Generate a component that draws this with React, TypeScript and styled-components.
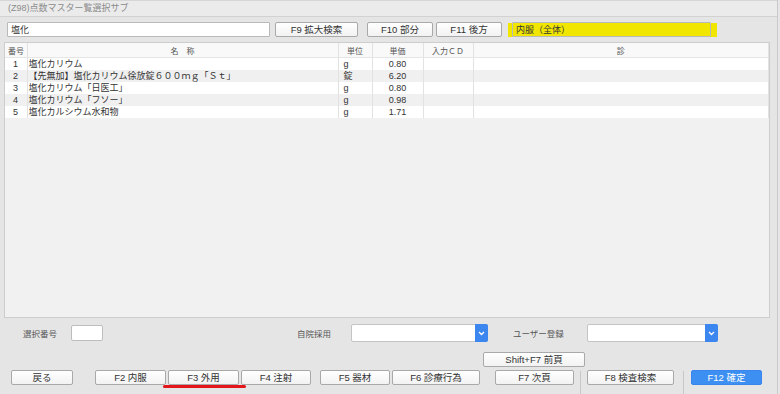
import React from 'react';
import styled, { createGlobalStyle } from 'styled-components';

const Global = createGlobalStyle`
  html, body { margin: 0; padding: 0; background: #e6e6e6; }
  body { font-family: "Liberation Sans", "Noto Sans CJK JP", sans-serif; color: #333; }
`;

type Row = { no: number; name: string; unit: string; price: string };

const rows: Row[] = [
  { no: 1, name: '塩化カリウム', unit: 'g', price: '0.80' },
  { no: 2, name: '【先無加】塩化カリウム徐放錠６００ｍｇ「Ｓｔ」', unit: '錠', price: '6.20' },
  { no: 3, name: '塩化カリウム「日医工」', unit: 'g', price: '0.80' },
  { no: 4, name: '塩化カリウム「フソー」', unit: 'g', price: '0.98' },
  { no: 5, name: '塩化カルシウム水和物', unit: 'g', price: '1.71' },
];

const Chevron = () => (
  <svg width="7" height="5" viewBox="0 0 7 5">
    <path d="M1 1 L3.5 3.5 L6 1" fill="none" stroke="#fff" strokeWidth="1.3" />
  </svg>
);

const App = () => {
  return (
    <Window>
      <Global />
      <TitleBar>(Z98)点数マスター覧選択サブ</TitleBar>

      <SearchRow>
        <SearchInput defaultValue="塩化" $w={263} />
        <Btn $w={83} $ml={5}>F9 拡大検索</Btn>
        <Btn $w={66} $ml={9}>F10 部分</Btn>
        <Btn $w={66} $ml={3}>F11 後方</Btn>
        <Highlight>
          <SearchInput defaultValue="内服（全体）" $w={199} $clear />
        </Highlight>
      </SearchRow>

      <TableBox>
        <Grid>
          <colgroup>
            <col style={{ width: 22 }} />
            <col style={{ width: 311 }} />
            <col style={{ width: 34 }} />
            <col style={{ width: 51 }} />
            <col style={{ width: 50 }} />
            <col />
          </colgroup>
          <thead>
            <tr>
              <Th $left>番号</Th>
              <Th>名　称</Th>
              <Th>単位</Th>
              <Th>単価</Th>
              <Th>入力ＣＤ</Th>
              <Th>診</Th>
            </tr>
          </thead>
          <tbody>
            {rows.map((r) => (
              <Tr key={r.no} $odd={r.no % 2 === 0}>
                <Td $pl={8}>{r.no}</Td>
                <Td $pl={1}>{r.name}</Td>
                <Td $pl={5}>{r.unit}</Td>
                <Td $center>{r.price}</Td>
                <Td />
                <Td />
              </Tr>
            ))}
          </tbody>
        </Grid>
      </TableBox>

      <FormRow>
        <Label $w={48}>選択番号</Label>
        <NumBox />
        <Label $w={54} $ml={194}>自院採用</Label>
        <Select $w={137}>
          <Arrow><Chevron /></Arrow>
        </Select>
        <Label $w={74} $ml={25}>ユーザー登録</Label>
        <Select $w={131}>
          <Arrow><Chevron /></Arrow>
        </Select>
      </FormRow>

      <ShiftRow>
        <Btn $w={102}>Shift+F7 前頁</Btn>
      </ShiftRow>

      <KeyRow>
        <Btn $w={62}>戻る</Btn>
        <Group $ml={22}>
          <Btn $w={71}>F2 内服</Btn>
          <Marked>
            <Btn $w={71}>F3 外用</Btn>
            <RedLine />
          </Marked>
          <Btn $w={70}>F4 注射</Btn>
        </Group>
        <Group $ml={9}>
          <Btn $w={70}>F5 器材</Btn>
          <Btn $w={88}>F6 診療行為</Btn>
        </Group>
        <Btn $w={79} $ml={15}>F7 次頁</Btn>
        <Sep $l={6} $r={6} />
        <Btn $w={87}>F8 検査検索</Btn>
        <Sep $l={9} $r={7} />
        <Btn $w={71} $primary>F12 確定</Btn>
      </KeyRow>
    </Window>
  );
};

export default App;

const Window = styled.div`
  width: 777px;
  height: 394px;
  border-right: 1px solid #c9c9c9;
  background: #e5e5e5;
  display: flex;
  flex-direction: column;
  font-size: 9px;
  overflow: hidden;
`;

const TitleBar = styled.div`
  height: 15px;
  line-height: 15px;
  padding-left: 8px;
  color: #8c8c8c;
  background: #ebebeb;
  border-top: 1px solid #d6d6d6;
  border-bottom: 1px solid #d2d2d2;
`;

const SearchRow = styled.div`
  display: flex;
  align-items: center;
  height: 15px;
  margin-top: 5px;
  padding-left: 7px;
`;

const SearchInput = styled.input<{ $w: number; $clear?: boolean }>`
  box-sizing: border-box;
  width: ${(p) => p.$w}px;
  height: 15px;
  padding: 0 0 0 3px;
  border: 1px solid #b9b9b9;
  border-radius: 1px;
  background: ${(p) => (p.$clear ? 'transparent' : '#fff')};
  font-family: inherit;
  font-size: 9px;
  color: #333;
  outline: none;
`;

const Highlight = styled.div`
  display: flex;
  align-items: center;
  height: 14px;
  margin-left: 6px;
  padding: 0 6px 0 4px;
  background: #f1e600;
`;

const Btn = styled.div<{ $w: number; $ml?: number; $primary?: boolean }>`
  box-sizing: border-box;
  width: ${(p) => p.$w}px;
  height: 15px;
  margin-left: ${(p) => p.$ml ?? 0}px;
  display: flex;
  align-items: center;
  justify-content: center;
  flex-shrink: 0;
  border: 1px solid ${(p) => (p.$primary ? '#3a86ee' : '#a9a9a9')};
  border-radius: 2px;
  background: ${(p) => (p.$primary ? '#3d8ff2' : 'linear-gradient(#ffffff, #f2f2f2)')};
  color: ${(p) => (p.$primary ? '#fff' : '#333')};
  font-size: 9.5px;
  line-height: 1;
  white-space: nowrap;
`;

const TableBox = styled.div`
  box-sizing: border-box;
  width: 766px;
  height: 276px;
  margin: 5px 0 0 4px;
  border: 1px solid #cdcdcd;
  background: #f1f1f1;
  overflow: hidden;
`;

const Grid = styled.table`
  width: 100%;
  border-collapse: collapse;
  table-layout: fixed;
`;

const Th = styled.th<{ $left?: boolean }>`
  height: 14px;
  padding: 0 0 0 ${(p) => (p.$left ? '3px' : '0')};
  text-align: ${(p) => (p.$left ? 'left' : 'center')};
  font-weight: normal;
  font-size: 8px;
  color: #555;
  background: #f9f9f9;
  border-right: 1px solid #e2e2e2;
  border-bottom: 1px solid #e6e6e6;
`;

const Tr = styled.tr<{ $odd: boolean }>`
  background: ${(p) => (p.$odd ? '#f0f0f0' : '#ffffff')};
`;

const Td = styled.td<{ $pl?: number; $center?: boolean }>`
  height: 12px;
  padding: 0 0 0 ${(p) => p.$pl ?? 0}px;
  line-height: 12px;
  text-align: ${(p) => (p.$center ? 'center' : 'left')};
  color: #333;
  font-size: 9px;
  white-space: nowrap;
  overflow: hidden;
  border-right: 1px solid #e2e2e2;
`;

const FormRow = styled.div`
  display: flex;
  align-items: center;
  height: 18px;
  margin-top: 6px;
  padding-left: 23px;
`;

const Label = styled.div<{ $w: number; $ml?: number }>`
  width: ${(p) => p.$w}px;
  margin-left: ${(p) => p.$ml ?? 0}px;
  flex-shrink: 0;
  font-size: 8.5px;
  color: #555;
`;

const NumBox = styled.div`
  box-sizing: border-box;
  width: 32px;
  height: 16px;
  border: 1px solid #bdbdbd;
  border-radius: 2px;
  background: #fff;
`;

const Select = styled.div<{ $w: number }>`
  box-sizing: border-box;
  width: ${(p) => p.$w}px;
  height: 18px;
  display: flex;
  justify-content: flex-end;
  flex-shrink: 0;
  border: 1px solid #c4c4c4;
  border-radius: 2px;
  background: #fff;
`;

const Arrow = styled.div`
  width: 13px;
  margin: -1px -1px -1px 0;
  display: flex;
  align-items: center;
  justify-content: center;
  border-radius: 0 2px 2px 0;
  background: #3b86ef;
`;

const ShiftRow = styled.div`
  display: flex;
  height: 15px;
  margin-top: 10px;
  padding-left: 483px;
`;

const KeyRow = styled.div`
  display: flex;
  align-items: flex-start;
  flex: 1;
  padding: 3px 0 0 11px;
`;

const Group = styled.div<{ $ml: number }>`
  display: flex;
  gap: 2px;
  margin-left: ${(p) => p.$ml}px;
  flex-shrink: 0;
`;

const Marked = styled.div`
  position: relative;
`;

const RedLine = styled.div`
  position: absolute;
  left: -5px;
  right: -7px;
  bottom: -3px;
  height: 3px;
  border-radius: 2px;
  background: #e3161b;
`;

const Sep = styled.div<{ $l: number; $r: number }>`
  align-self: stretch;
  width: 1px;
  flex-shrink: 0;
  margin: 1px ${(p) => p.$r}px 0 ${(p) => p.$l}px;
  background: #c8c8c8;
`;
